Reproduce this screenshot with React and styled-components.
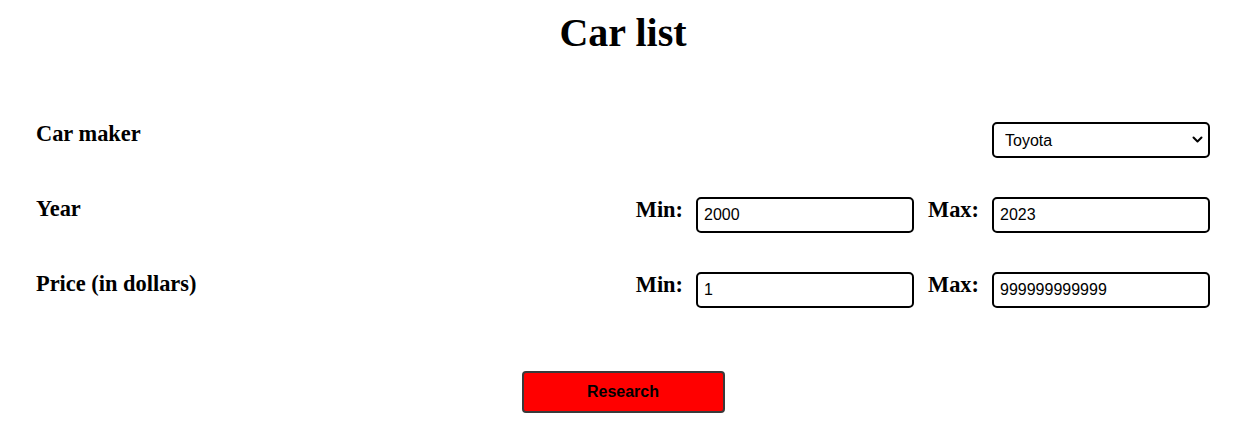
import React from "react";
import styled, { createGlobalStyle } from "styled-components";

const GlobalStyle = createGlobalStyle`
  body {
    margin: 0;
    background: #ffffff;
    font-family: "Liberation Serif", "Times New Roman", serif;
    color: #000000;
  }
`;

const Page = styled.main`
  padding: 11px 39px 0 36px;
`;

const Title = styled.h1`
  margin: 0;
  font-size: 40px;
  line-height: 44px;
  font-weight: bold;
  text-align: center;
`;

const Form = styled.form`
  margin-top: 66px;
  display: flex;
  flex-direction: column;
  gap: 39px;
`;

const Row = styled.div`
  display: flex;
  justify-content: space-between;
  align-items: flex-start;
  height: 36px;
`;

const Label = styled.label`
  font-size: 22.4px;
  font-weight: bold;
  line-height: 25px;
  margin-top: ${(p) => p.$offset || 0}px;
`;

const Controls = styled.div`
  display: flex;
  align-items: flex-start;
`;

const Field = styled.div`
  display: flex;
  align-items: flex-start;
  gap: 13px;
  margin-left: ${(p) => (p.$first ? 0 : 14)}px;
`;

const TextInput = styled.input`
  box-sizing: border-box;
  width: 218px;
  height: 36px;
  margin: 1px 0 0;
  padding: 0 6px;
  border: 2px solid #000000;
  border-radius: 5px;
  font-family: "Liberation Sans", Arial, sans-serif;
  font-size: 16px;
  color: #000000;
  background: #ffffff;
  outline: none;
  -moz-appearance: textfield;

  &::-webkit-inner-spin-button,
  &::-webkit-outer-spin-button {
    -webkit-appearance: none;
    margin: 0;
  }
`;

const SelectWrap = styled.div`
  position: relative;
  margin-top: 1px;
`;

const Select = styled.select`
  box-sizing: border-box;
  display: block;
  width: 218px;
  height: 36px;
  margin: 0;
  padding: 0 30px 0 11px;
  border: 2px solid #000000;
  border-radius: 5px;
  appearance: none;
  -webkit-appearance: none;
  font-family: "Liberation Sans", Arial, sans-serif;
  font-size: 16px;
  color: #000000;
  background: #ffffff;
`;

const Chevron = styled.svg`
  position: absolute;
  right: 7px;
  top: 14px;
  width: 11px;
  height: 7px;
  pointer-events: none;
`;

const Actions = styled.div`
  display: flex;
  justify-content: center;
  margin-top: 64px;
`;

const Button = styled.button`
  box-sizing: border-box;
  width: 203px;
  height: 42px;
  background: #ff0000;
  border: 2px solid #3a3a3a;
  border-radius: 4px;
  font-family: "Liberation Sans", Arial, sans-serif;
  font-size: 16px;
  font-weight: bold;
  color: #000000;
  cursor: pointer;
`;

const RangeRow = ({ label, min, max }) => (
  <Row>
    <Label>{label}</Label>
    <Controls>
      <Field $first>
        <Label $offset={1}>Min:</Label>
        <TextInput type="number" defaultValue={min} />
      </Field>
      <Field>
        <Label $offset={1}>Max:</Label>
        <TextInput type="number" defaultValue={max} />
      </Field>
    </Controls>
  </Row>
);

const App = () => {
  return (
    <Page>
      <GlobalStyle />
      <Title>Car list</Title>
      <Form onSubmit={(e) => e.preventDefault()}>
        <Row>
          <Label>Car maker</Label>
          <SelectWrap>
            <Select defaultValue="Toyota">
              <option>Toyota</option>
              <option>Honda</option>
              <option>Ford</option>
              <option>BMW</option>
            </Select>
            <Chevron viewBox="0 0 11 7">
              <path
                d="M1.5 1.5 L5.5 5.5 L9.5 1.5"
                fill="none"
                stroke="#000"
                strokeWidth="2"
                strokeLinecap="round"
                strokeLinejoin="round"
              />
            </Chevron>
          </SelectWrap>
        </Row>
        <RangeRow label="Year" min="2000" max="2023" />
        <RangeRow label="Price (in dollars)" min="1" max="999999999999" />
      </Form>
      <Actions>
        <Button type="submit">Research</Button>
      </Actions>
    </Page>
  );
};

export default App;
